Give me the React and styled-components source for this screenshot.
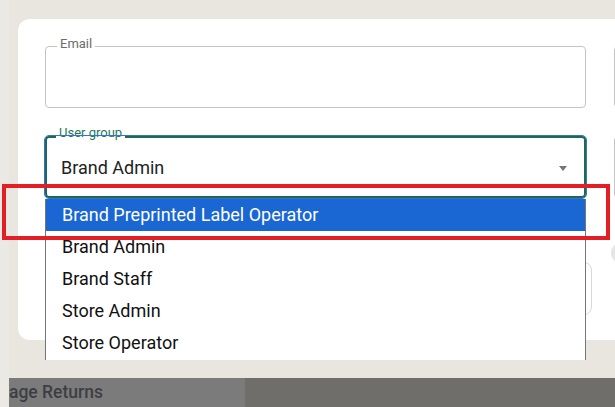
import React from "react";
import styled, { createGlobalStyle } from "styled-components";

const GlobalStyle = createGlobalStyle`
  html, body {
    margin: 0;
    padding: 0;
    background: #e9e6e0;
    font-family: Roboto, "Liberation Sans", sans-serif;
  }
  * { box-sizing: border-box; }
`;

const Page = styled.div`
  position: relative;
  display: flex;
  width: 615px;
  height: 407px;
  overflow: hidden;
`;

const Strip = styled.div`
  flex: 0 0 9px;
  background: #ebe9e4;
`;

const Main = styled.div`
  flex: 1;
  display: flex;
  flex-direction: column;
  min-width: 0;
`;

const Backdrop = styled.div`
  height: 378px;
  background: #e9e6e0;
  padding: 19px 0 0 9px;
`;

const Card = styled.div`
  width: 1140px;
  height: 321px;
  background: #fff;
  border-radius: 12px 0 0 12px;
  padding: 27px;
`;

const Grid = styled.div`
  display: grid;
  grid-template-columns: 541px 541px;
  column-gap: 28px;
  row-gap: 28px;
`;

const Field = styled.div`
  position: relative;
  height: 62px;
  border: 1px solid #c4c4c4;
  border-radius: 4px;
  background: #fff;
`;

const Label = styled.span`
  position: absolute;
  top: -10px;
  left: 11px;
  padding: 0 3px;
  background: #fff;
  font-size: 13px;
  line-height: 13px;
  color: ${(p) => (p.$active ? "#1d7a55" : "#6b6b6b")};
  z-index: 1;
`;

const SelectWrap = styled.div`
  position: relative;
`;

const SelectBox = styled.div`
  position: relative;
  height: 62px;
  border: 2px solid #1b6b4e;
  border-radius: 4px;
  display: flex;
  align-items: center;
  justify-content: space-between;
  padding: 0 14px;
  font-size: 18px;
  color: #222;

  &::after {
    content: "";
    position: absolute;
    inset: -3px;
    border: 1px solid #3a6fd8;
    border-radius: 5px;
    z-index: 2;
    pointer-events: none;
  }
`;

const Arrow = styled.span`
  width: 0;
  height: 0;
  border-left: 4.5px solid transparent;
  border-right: 4.5px solid transparent;
  border-top: 5px solid #757575;
  margin-right: 3px;
  margin-top: 2px;
`;

const Menu = styled.ul`
  position: absolute;
  top: calc(100% + 1px);
  left: 0;
  width: 541px;
  height: 161px;
  margin: 0;
  padding: 0;
  list-style: none;
  background: #fff;
  border-left: 1px solid #767676;
  border-right: 1px solid #767676;
  overflow: hidden;
  z-index: 3;
`;

const Option = styled.li`
  height: 32px;
  line-height: 32px;
  padding-left: 16px;
  font-size: 18px;
  color: ${(p) => (p.$selected ? "#fff" : "#111")};
  background: ${(p) => (p.$selected ? "#1a66d2" : "#fff")};
`;

const Row = styled.div`
  grid-column: 1 / -1;
  display: flex;
  align-items: flex-start;
  padding-top: 16px;
`;

const Box = styled.div`
  flex: 0 0 547px;
  height: 53px;
  margin-top: 20px;
  border: 1px solid #d6d9df;
  border-radius: 8px;
`;

const Circle = styled.div`
  flex: 0 0 22px;
  height: 22px;
  margin-left: 19px;
  border-radius: 50%;
  background: #e6e6e8;
`;

const Band = styled.div`
  flex: 1;
  display: flex;
  box-shadow: inset 0 3px 4px rgba(0, 0, 0, 0.2);
`;

const BandTab = styled.div`
  flex: 0 0 236px;
  background: #7b7b7b;
  font-size: 17.5px;
  font-weight: 500;
  color: #3b3f43;
  padding-top: 4px;
  line-height: 20px;
`;

const BandRest = styled.div`
  flex: 1;
  background: #6f6e6a;
`;

const Highlight = styled.div`
  position: absolute;
  left: 2px;
  top: 184px;
  width: 608px;
  height: 56px;
  border: 4px solid #e31e24;
  z-index: 5;
  pointer-events: none;
`;

const options = [
  "Brand Preprinted Label Operator",
  "Brand Admin",
  "Brand Staff",
  "Store Admin",
  "Store Operator",
];

export default function App() {
  return (
    <>
      <GlobalStyle />
      <Page>
        <Strip />
        <Main>
          <Backdrop>
            <Card>
              <Grid>
                <Field>
                  <Label>Email</Label>
                </Field>
                <Field />
                <SelectWrap>
                  <Label $active>User group</Label>
                  <SelectBox>
                    <span>Brand Admin</span>
                    <Arrow />
                  </SelectBox>
                  <Menu>
                    {options.map((o, i) => (
                      <Option key={o} $selected={i === 0}>
                        {o}
                      </Option>
                    ))}
                  </Menu>
                </SelectWrap>
                <Field />
                <Row>
                  <Box />
                  <Circle />
                </Row>
              </Grid>
            </Card>
          </Backdrop>
          <Band>
            <BandTab>age Returns</BandTab>
            <BandRest />
          </Band>
        </Main>
        <Highlight />
      </Page>
    </>
  );
}
